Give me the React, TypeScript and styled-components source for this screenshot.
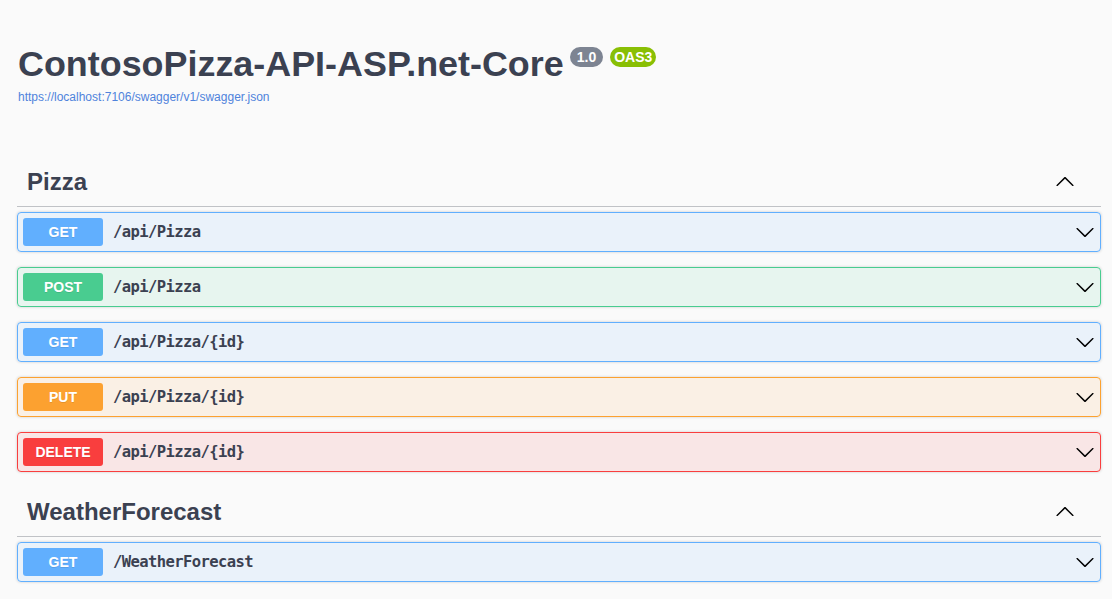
import React from "react";
import styled, { createGlobalStyle } from "styled-components";

const GlobalStyle = createGlobalStyle`
  html, body {
    margin: 0;
    padding: 0;
    background: #fafafa;
    font-family: "Liberation Sans", Arial, sans-serif;
    color: #3b4151;
  }
`;

const Wrapper = styled.div`
  padding: 0 11px 0 17px;
`;

const Info = styled.div`
  padding: 43px 0 0 1px;
  margin-bottom: 54px;
`;

const Title = styled.h2`
  margin: 0;
  font-size: 35.9px;
  line-height: 42px;
  font-weight: 700;
  color: #3b4151;
  display: flex;
  align-items: flex-start;
`;

const Badges = styled.span`
  display: inline-flex;
  gap: 7px;
  margin: 4px 0 0 6px;
`;

const Badge = styled.small<{ $bg: string; $px: number }>`
  display: inline-block;
  background: ${(p) => p.$bg};
  color: #fff;
  font-size: 14px;
  font-weight: 700;
  line-height: 16px;
  padding: 2px ${(p) => p.$px}px;
  border-radius: 57px;
`;

const Link = styled.a`
  display: block;
  margin-top: 5px;
  font-size: 12px;
  line-height: 14px;
  color: #4f83dc;
  text-decoration: none;
`;

const Section = styled.section`
  padding-bottom: 1px;
`;

const TagHeader = styled.div`
  display: flex;
  align-items: center;
  justify-content: space-between;
  padding: 10px 26px 10px 10px;
  border-bottom: 1px solid rgba(59, 65, 81, 0.3);
  margin-bottom: 5px;
`;

const TagName = styled.h3`
  margin: 0;
  font-size: 24px;
  line-height: 28px;
  font-weight: 700;
  color: #3b4151;
`;

const methodColors: Record<string, string> = {
  GET: "97,175,254",
  POST: "73,204,144",
  PUT: "252,161,48",
  DELETE: "249,62,62",
};

const OpBlock = styled.div<{ $rgb: string }>`
  display: flex;
  align-items: center;
  padding: 5px;
  margin-bottom: 15px;
  border: 1px solid rgb(${(p) => p.$rgb});
  background: rgba(${(p) => p.$rgb}, 0.1);
  border-radius: 4px;
  box-shadow: 0 0 3px rgba(0, 0, 0, 0.19);
`;

const Method = styled.span<{ $rgb: string }>`
  min-width: 80px;
  box-sizing: border-box;
  padding: 6px 0;
  line-height: 16px;
  text-align: center;
  font-size: 14px;
  font-weight: 700;
  color: #fff;
  background: rgb(${(p) => p.$rgb});
  border-radius: 3px;
  text-shadow: 0 1px 0 rgba(0, 0, 0, 0.1);
`;

const Path = styled.span`
  flex: 1;
  padding: 0 10px;
  font-family: "DejaVu Sans Mono", "Liberation Mono", monospace;
  font-size: 15.5px;
  letter-spacing: -0.58px;
  font-weight: 700;
  color: #3b4151;
`;

const ArrowSvg = styled.svg<{ $up?: boolean }>`
  width: 20px;
  height: 20px;
  flex: none;
  transform: ${(p) => (p.$up ? "rotate(180deg)" : "none")};
`;

const Arrow = ({ up }: { up?: boolean }) => (
  <ArrowSvg $up={up} viewBox="0 0 20 20" aria-hidden="true">
    <path
      fill="#000"
      d="M17.418 6.109c.272-.268.709-.268.979 0s.271.701 0 .969l-7.908 7.83c-.27.268-.707.268-.979 0l-7.908-7.83c-.27-.268-.27-.701 0-.969.271-.268.709-.268.979 0L10 13.25l7.418-7.141z"
    />
  </ArrowSvg>
);

const sections = [
  {
    name: "Pizza",
    ops: [
      ["GET", "/api/Pizza"],
      ["POST", "/api/Pizza"],
      ["GET", "/api/Pizza/{id}"],
      ["PUT", "/api/Pizza/{id}"],
      ["DELETE", "/api/Pizza/{id}"],
    ],
  },
  {
    name: "WeatherForecast",
    ops: [["GET", "/WeatherForecast"]],
  },
];

export default function App() {
  return (
    <>
      <GlobalStyle />
      <Wrapper>
        <Info>
          <Title>
            ContosoPizza-API-ASP.net-Core
            <Badges>
              <Badge $bg="#7d8492" $px={7}>1.0</Badge>
              <Badge $bg="#89bf04" $px={4}>OAS3</Badge>
            </Badges>
          </Title>
          <Link href="#">https://localhost:7106/swagger/v1/swagger.json</Link>
        </Info>
        {sections.map((s) => (
          <Section key={s.name}>
            <TagHeader>
              <TagName>{s.name}</TagName>
              <Arrow up />
            </TagHeader>
            {s.ops.map(([m, p], i) => (
              <OpBlock key={i} $rgb={methodColors[m]}>
                <Method $rgb={methodColors[m]}>{m}</Method>
                <Path>{p}</Path>
                <Arrow />
              </OpBlock>
            ))}
          </Section>
        ))}
      </Wrapper>
    </>
  );
}
